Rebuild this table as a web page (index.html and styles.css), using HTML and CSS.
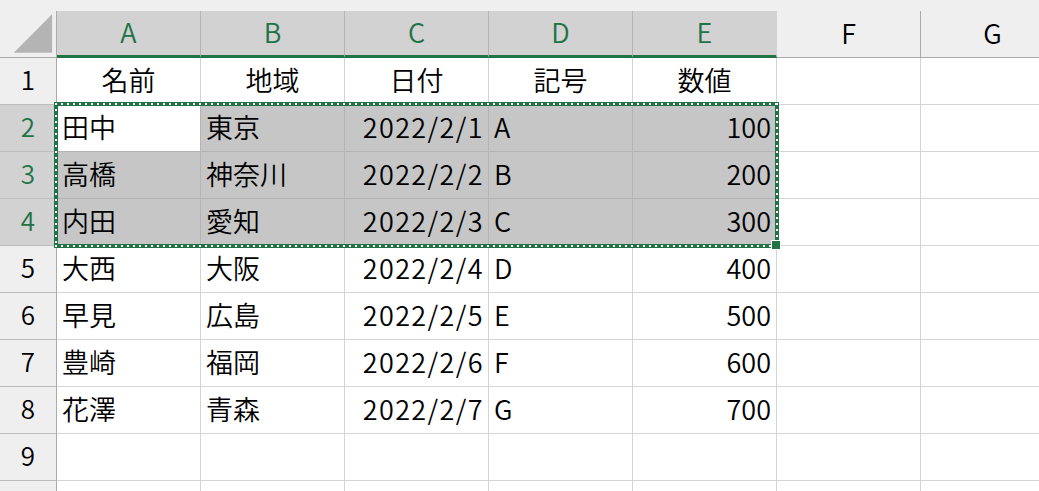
FILE: index.html
```html
<!DOCTYPE html>
<html lang="ja">
<head>
<meta charset="utf-8">
<title>Sheet</title>
<link rel="stylesheet" href="styles.css">
</head>
<body>
<div class="sheet">
  <div class="topstrip"></div>
  <div class="grid">
    <div class="corner"><svg width="57" height="47" viewBox="0 0 57 47"><polygon points="14,42 53,42 53,3" fill="#b4b4b4"/></svg></div>
    <div class="ch sel">A</div>
    <div class="ch sel">B</div>
    <div class="ch sel">C</div>
    <div class="ch sel">D</div>
    <div class="ch sel last">E</div>
    <div class="ch">F</div>
    <div class="ch">G</div>

    <div class="rh">1</div>
    <div class="c ctr">名前</div>
    <div class="c ctr">地域</div>
    <div class="c ctr">日付</div>
    <div class="c ctr">記号</div>
    <div class="c ctr">数値</div>
    <div class="c"></div>
    <div class="c"></div>

    <div class="rh sel">2</div>
    <div class="c active">田中</div>
    <div class="c s">東京</div>
    <div class="c s r date">2022/2/1</div>
    <div class="c s">A</div>
    <div class="c s r">100</div>
    <div class="c"></div>
    <div class="c"></div>

    <div class="rh sel">3</div>
    <div class="c s">高橋</div>
    <div class="c s">神奈川</div>
    <div class="c s r date">2022/2/2</div>
    <div class="c s">B</div>
    <div class="c s r">200</div>
    <div class="c"></div>
    <div class="c"></div>

    <div class="rh sel">4</div>
    <div class="c s">内田</div>
    <div class="c s">愛知</div>
    <div class="c s r date">2022/2/3</div>
    <div class="c s">C</div>
    <div class="c s r">300</div>
    <div class="c"></div>
    <div class="c"></div>

    <div class="rh">5</div>
    <div class="c">大西</div>
    <div class="c">大阪</div>
    <div class="c r date">2022/2/4</div>
    <div class="c">D</div>
    <div class="c r">400</div>
    <div class="c"></div>
    <div class="c"></div>

    <div class="rh">6</div>
    <div class="c">早見</div>
    <div class="c">広島</div>
    <div class="c r date">2022/2/5</div>
    <div class="c">E</div>
    <div class="c r">500</div>
    <div class="c"></div>
    <div class="c"></div>

    <div class="rh">7</div>
    <div class="c">豊崎</div>
    <div class="c">福岡</div>
    <div class="c r date">2022/2/6</div>
    <div class="c">F</div>
    <div class="c r">600</div>
    <div class="c"></div>
    <div class="c"></div>

    <div class="rh">8</div>
    <div class="c">花澤</div>
    <div class="c">青森</div>
    <div class="c r date">2022/2/7</div>
    <div class="c">G</div>
    <div class="c r">700</div>
    <div class="c"></div>
    <div class="c"></div>

    <div class="rh">9</div>
    <div class="c"></div>
    <div class="c"></div>
    <div class="c"></div>
    <div class="c"></div>
    <div class="c"></div>
    <div class="c"></div>
    <div class="c"></div>

    <div class="rh"></div>
    <div class="c"></div>
    <div class="c"></div>
    <div class="c"></div>
    <div class="c"></div>
    <div class="c"></div>
    <div class="c"></div>
    <div class="c"></div>
  </div>
  <div class="selection"></div>
  <div class="handle"></div>
</div>
</body>
</html>
```
FILE: styles.css
```css
html, body {
  margin: 0;
  padding: 0;
  background: #ffffff;
  overflow: hidden;
}
.sheet {
  position: relative;
  width: 1039px;
  height: 491px;
  overflow: hidden;
  font-family: "Noto Sans CJK JP", "Noto Sans", sans-serif;
  font-weight: 350;
  color: #000;
}
.topstrip {
  height: 11px;
  background: #efefef;
}
.grid {
  display: grid;
  grid-template-columns: 57px repeat(7, 144px);
  grid-auto-rows: 47px;
  width: 1065px;
}
.grid > div {
  box-sizing: border-box;
  display: flex;
  align-items: center;
  font-size: 27px;
  line-height: 1;
  white-space: nowrap;
  overflow: hidden;
  padding-bottom: 4px;
}
.corner {
  background: #efefef;
  border-right: 1px solid #ababab;
  border-bottom: 1px solid #ababab;
  padding-bottom: 0 !important;
}
.corner svg { display: block; }
.ch {
  background: #efefef;
  border-right: 1px solid #ababab;
  border-bottom: 1px solid #ababab;
  justify-content: center;
  font-size: 27px !important;
}
.ch.sel {
  background: #d2d2d2;
  color: #217346;
  border-bottom: 3px solid #217346;
  border-right-color: #b4b4b4;
}
.ch.sel.last {
  border-right-color: #d2d2d2;
}
.rh {
  background: #efefef;
  border-right: 1px solid #ababab;
  border-bottom: 1px solid #bcbcbc;
  justify-content: center;
  font-size: 26px !important;
}
.rh.sel {
  background: #d2d2d2;
  color: #217346;
}
.c {
  border-right: 1px solid #d4d4d4;
  border-bottom: 1px solid #d4d4d4;
  padding-left: 5px;
  padding-right: 5px;
}
.c.ctr { justify-content: center; }
.c.r { justify-content: flex-end; }
.c.date { letter-spacing: 1.4px; padding-right: 4px; }
.c.s {
  background: #c6c6c6;
  border-right-color: #b4b4b4;
  border-bottom-color: #b4b4b4;
}
.c.active {
  background: #ffffff;
  border-right-color: #b4b4b4;
  border-bottom-color: #b4b4b4;
}
.selection {
  position: absolute;
  left: 54px;
  top: 102px;
  width: 725px;
  height: 146px;
  box-sizing: border-box;
  border: 4px solid #217346;
}
.selection::before,
.selection::after {
  content: "";
  position: absolute;
}
.selection::before {
  left: -3px;
  right: -3px;
  top: -3px;
  bottom: -3px;
  background:
    repeating-linear-gradient(90deg, #ffffff 0 2px, transparent 2px 6px) top left / 100% 2px no-repeat,
    repeating-linear-gradient(90deg, #ffffff 0 2px, transparent 2px 6px) bottom left / 100% 2px no-repeat;
}
.selection::after {
  left: -3px;
  right: -3px;
  top: -3px;
  bottom: -3px;
  background:
    repeating-linear-gradient(180deg, #ffffff 0 2px, transparent 2px 6px) top left / 2px 100% no-repeat,
    repeating-linear-gradient(180deg, #ffffff 0 2px, transparent 2px 6px) top right / 2px 100% no-repeat;
}
.handle {
  position: absolute;
  left: 771px;
  top: 240px;
  width: 8px;
  height: 8px;
  background: #217346;
  border: 1px solid #ffffff;
}
```
